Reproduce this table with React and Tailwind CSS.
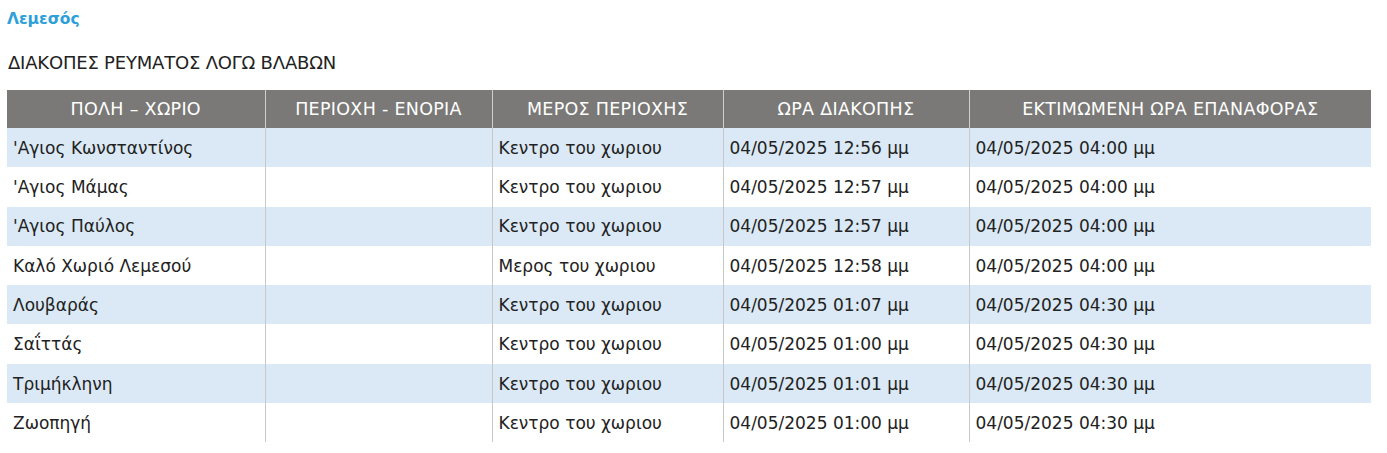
import React from 'react';

const rows = [
  ["'Αγιος Κωνσταντίνος", '', 'Κεντρο του χωριου', '04/05/2025 12:56 μμ', '04/05/2025 04:00 μμ'],
  ["'Αγιος Μάμας", '', 'Κεντρο του χωριου', '04/05/2025 12:57 μμ', '04/05/2025 04:00 μμ'],
  ["'Αγιος Παύλος", '', 'Κεντρο του χωριου', '04/05/2025 12:57 μμ', '04/05/2025 04:00 μμ'],
  ['Καλό Χωριό Λεμεσού', '', 'Μερος του χωριου', '04/05/2025 12:58 μμ', '04/05/2025 04:00 μμ'],
  ['Λουβαράς', '', 'Κεντρο του χωριου', '04/05/2025 01:07 μμ', '04/05/2025 04:30 μμ'],
  ['Σαΐττάς', '', 'Κεντρο του χωριου', '04/05/2025 01:00 μμ', '04/05/2025 04:30 μμ'],
  ['Τριμήκληνη', '', 'Κεντρο του χωριου', '04/05/2025 01:01 μμ', '04/05/2025 04:30 μμ'],
  ['Ζωοπηγή', '', 'Κεντρο του χωριου', '04/05/2025 01:00 μμ', '04/05/2025 04:30 μμ'],
];

const headers = ['ΠΟΛΗ – ΧΩΡΙΟ', 'ΠΕΡΙΟΧΗ - ΕΝΟΡΙΑ', 'ΜΕΡΟΣ ΠΕΡΙΟΧΗΣ', 'ΩΡΑ ΔΙΑΚΟΠΗΣ', 'ΕΚΤΙΜΩΜΕΝΗ ΩΡΑ ΕΠΑΝΑΦΟΡΑΣ'];
const widths = ['w-[258px]', 'w-[227px]', 'w-[231px]', 'w-[246px]', 'w-[402px]'];

export default function App() {
  return (
    <div className="bg-white px-[7px] pt-[8px] text-[#222] font-['DejaVu_Sans',sans-serif]">
      <h3 className="text-[15.5px] font-bold text-[#2d9fd9] h-[22px] leading-[22px]">Λεμεσός</h3>
      <p className="mt-[22px] text-[18px] leading-[22px] pl-px tracking-[-0.2px]">ΔΙΑΚΟΠΕΣ ΡΕΥΜΑΤΟΣ ΛΟΓΩ ΒΛΑΒΩΝ</p>
      <table className="mt-[16px] border-collapse table-fixed w-[1364px]">
        <thead>
          <tr className="bg-[#7a7977] h-[38px]">
            {headers.map((h, i) => (
              <th
                key={i}
                className={`${widths[i]} text-white font-normal text-[17.5px] tracking-[0.3px] text-center px-[4px] whitespace-nowrap overflow-hidden ${i > 0 ? 'border-l border-[#cfcfcf]' : ''}`}
              >
                {h}
              </th>
            ))}
          </tr>
        </thead>
        <tbody>
          {rows.map((r, ri) => (
            <tr key={ri} className={`h-[39.3px] ${ri % 2 === 0 ? 'bg-[#dae9f5]' : 'bg-white'}`}>
              {r.map((c, ci) => (
                <td
                  key={ci}
                  className={`text-[17px] text-[#222] px-[6px] pt-[2px] whitespace-nowrap ${ci > 0 ? 'border-l border-[#c8c8c8]' : ''}`}
                >
                  {c}
                </td>
              ))}
            </tr>
          ))}
        </tbody>
      </table>
    </div>
  );
}
